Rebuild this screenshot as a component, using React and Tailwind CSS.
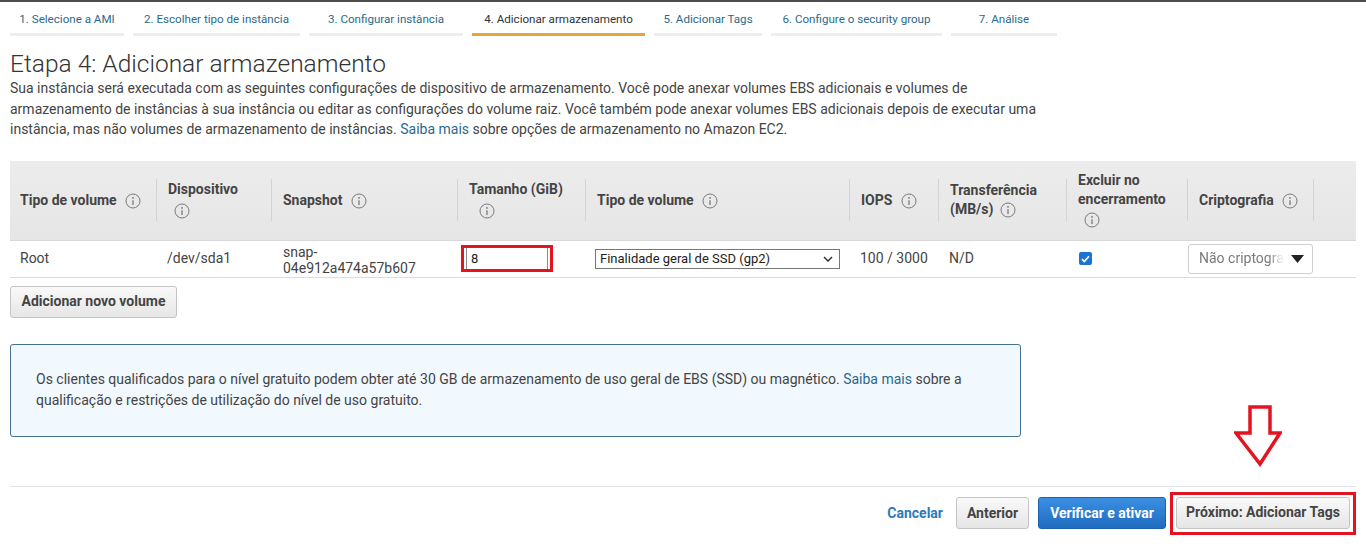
import React from 'react';

const tabs = [
  { label: '1. Selecione a AMI', w: 'w-[114px]' },
  { label: '2. Escolher tipo de instância', w: 'w-[167px]' },
  { label: '3. Configurar instância', w: 'w-[154px]' },
  { label: '4. Adicionar armazenamento', w: 'w-[173px]', active: true },
  { label: '5. Adicionar Tags', w: 'w-[108px]' },
  { label: '6. Configure o security group', w: 'w-[171px]' },
  { label: '7. Análise', w: 'w-[106px]' },
];

// Small circled "i" used next to column titles
function InfoIcon() {
  return (
    <svg width="16" height="16" viewBox="0 0 16 16" className="inline-block shrink-0 align-middle">
      <circle cx="8" cy="8" r="7" fill="none" stroke="#7a7a7a" strokeWidth="1" />
      <circle cx="8" cy="4.9" r="0.9" fill="#7a7a7a" />
      <path d="M8 7.2v4.8" stroke="#7a7a7a" strokeWidth="1.3" />
    </svg>
  );
}

function HeadCell({ children, sep = true, first = false }) {
  return (
    <div className="flex h-[79px] items-center">
      {sep && <div className="h-[42px] w-px shrink-0 bg-[#d3d3d3]" />}
      <div className={`${first ? 'pl-[10px]' : 'pl-[11px]'} text-[14px] font-bold leading-[19px] text-[#444]`}>
        {children}
      </div>
    </div>
  );
}

function Cell({ children, className = '' }) {
  return (
    <div className={`flex h-[37px] items-center border-b border-[#dcdcdc] text-[14px] ${className}`}>{children}</div>
  );
}

function GrayButton({ children, className = '' }) {
  return (
    <button
      className={`h-[32px] rounded-[3px] border border-[#c4c4c4] bg-gradient-to-b from-[#f9f9f9] to-[#e6e6e6] px-[8px] text-[14px] font-bold text-[#444] ${className}`}
    >
      {children}
    </button>
  );
}

export default function App() {
  return (
    <div className="min-h-[549px] bg-white font-['Roboto',sans-serif] text-[14px] text-[#444]">
      <div className="h-[2px] bg-[#4d4d4d]" />

      {/* Wizard steps */}
      <div className="flex gap-[9px] pl-[10px]">
        {tabs.map((t) => (
          <div
            key={t.label}
            className={`${t.w} border-b-[3px] pb-[7px] pt-[10px] text-center text-[11.6px] leading-[14px] ${
              t.active ? 'border-[#e8a33d] text-[#333]' : 'border-[#eeeeee] text-[#2b6a8a]'
            }`}
          >
            {t.label}
          </div>
        ))}
      </div>

      <div className="px-[10px]">
        <h1 className="mt-[14px] text-[24.5px] font-light leading-[28px] text-[#333]">
          Etapa 4: Adicionar armazenamento
        </h1>
        <p className="leading-[20.5px]">
          Sua instância será executada com as seguintes configurações de dispositivo de armazenamento. Você pode anexar
          volumes EBS adicionais e volumes de
          <br />
          armazenamento de instâncias à sua instância ou editar as configurações do volume raiz. Você também pode anexar
          volumes EBS adicionais depois de executar uma
          <br />
          instância, mas não volumes de armazenamento de instâncias. <span className="text-[#2b6a8a]">Saiba mais</span>{' '}
          sobre opções de armazenamento no Amazon EC2.
        </p>

        {/* Storage table */}
        <div className="mt-[21px] grid grid-cols-[146px_115px_186px_128px_264px_89px_128px_121px_126px_1fr]">
          <div className="col-span-10 grid grid-cols-subgrid border-b border-[#d8d8d8] bg-gradient-to-b from-[#ececec] to-[#e6e6e6]">
            <HeadCell sep={false} first>
              Tipo de volume <span className="ml-[5px]"><InfoIcon /></span>
            </HeadCell>
            <HeadCell>
              Dispositivo
              <div className="pl-[6px] pt-[2px]"><InfoIcon /></div>
            </HeadCell>
            <HeadCell>
              Snapshot <span className="ml-[5px]"><InfoIcon /></span>
            </HeadCell>
            <HeadCell>
              Tamanho (GiB)
              <div className="pl-[10px] pt-[2px]"><InfoIcon /></div>
            </HeadCell>
            <HeadCell>
              Tipo de volume <span className="ml-[5px]"><InfoIcon /></span>
            </HeadCell>
            <HeadCell>
              IOPS <span className="ml-[5px]"><InfoIcon /></span>
            </HeadCell>
            <HeadCell>
              Transferência
              <br />
              (MB/s) <span className="ml-[3px]"><InfoIcon /></span>
            </HeadCell>
            <HeadCell>
              Excluir no
              <br />
              encerramento
              <div className="pl-[6px] pt-[1px]"><InfoIcon /></div>
            </HeadCell>
            <HeadCell>
              Criptografia <span className="ml-[5px]"><InfoIcon /></span>
            </HeadCell>
            <HeadCell>{''}</HeadCell>
          </div>

          <Cell className="pl-[10px]">Root</Cell>
          <Cell className="pl-[11px]">/dev/sda1</Cell>
          <Cell className="pl-[12px] leading-[16px]">
            <div className="pt-[2px]">
              snap-
              <br />
              04e912a474a57b607
            </div>
          </Cell>
          <Cell className="pl-[4px]">
            <div className="h-[27px] w-[92px] border-[3px] border-[#e3141f] bg-white">
              <div className="mx-[2px] flex h-full items-center border-x border-[#8a8a8a] pl-[4px] text-[13px] text-[#222]">
                8
              </div>
            </div>
          </Cell>
          <Cell className="pl-[10px]">
            <div className="flex h-[20px] w-[245px] items-center justify-between border border-[#767676] bg-white pl-[4px] pr-[6px] text-[13px] text-[#222]">
              <span>Finalidade geral de SSD (gp2)</span>
              <svg width="10" height="6" viewBox="0 0 10 6">
                <path d="M1 1l4 4 4-4" fill="none" stroke="#333" strokeWidth="1.5" />
              </svg>
            </div>
          </Cell>
          <Cell className="pl-[11px]">100 / 3000</Cell>
          <Cell className="pl-[11px]">N/D</Cell>
          <Cell className="pl-[13px]">
            <span className="flex h-[13px] w-[13px] items-center justify-center rounded-[2px] bg-[#1b73d8]">
              <svg width="9" height="8" viewBox="0 0 9 8">
                <path d="M1 4.2l2.3 2.3L8 1.3" fill="none" stroke="#fff" strokeWidth="1.7" />
              </svg>
            </span>
          </Cell>
          <Cell className="pl-[1px]">
            <div className="flex h-[30px] w-[126px] items-center justify-between rounded-[3px] border border-[#cfcfcf] bg-white pl-[10px] pr-[8px]">
              <span className="whitespace-nowrap text-[#7a7a7a] [mask-image:linear-gradient(to_right,#000_82%,transparent)]">
                Não criptogra
              </span>
              <svg width="13" height="8" viewBox="0 0 13 8" className="shrink-0">
                <path d="M0 0h13L6.5 8z" fill="#222" />
              </svg>
            </div>
          </Cell>
          <Cell>{''}</Cell>
        </div>

        <GrayButton className="mt-[8px] w-[167px]">Adicionar novo volume</GrayButton>

        {/* Free tier notice */}
        <div className="mt-[26px] h-[93px] w-[1011px] rounded-[3px] border border-[#46708f] bg-[#f1f8fe] pl-[25px] pt-[24px] leading-[21px]">
          Os clientes qualificados para o nível gratuito podem obter até 30 GB de armazenamento de uso geral de EBS (SSD)
          ou magnético. <span className="text-[#2b6a8a]">Saiba mais</span> sobre a
          <br />
          qualificação e restrições de utilização do nível de uso gratuito.
        </div>

        {/* Footer actions */}
        <div className="mt-[49px] flex items-center justify-end border-t border-[#e4e4e4] pt-[5px]">
          <span className="mr-[13px] font-bold text-[#2c7bb8]">Cancelar</span>
          <GrayButton className="mr-[9px] w-[73px]">Anterior</GrayButton>
          <button className="mr-[4px] h-[32px] w-[128px] rounded-[3px] border border-[#1e62ad] bg-gradient-to-b from-[#3b8fe3] to-[#1f6cc0] text-[14px] font-bold text-white">
            Verificar e ativar
          </button>
          <div className="relative border-[3px] border-[#e3141f] px-[3px] pb-[3px] pt-[2px]">
            <GrayButton className="w-[174px]">Próximo: Adicionar Tags</GrayButton>
            <svg width="48" height="62" viewBox="0 0 48 62" className="absolute left-[61px] top-[-90px]">
              <path d="M16 2h20v26h10L26 59 2 28h14z" fill="none" stroke="#e3141f" strokeWidth="3.5" strokeLinejoin="miter" />
            </svg>
          </div>
        </div>
      </div>
    </div>
  );
}
